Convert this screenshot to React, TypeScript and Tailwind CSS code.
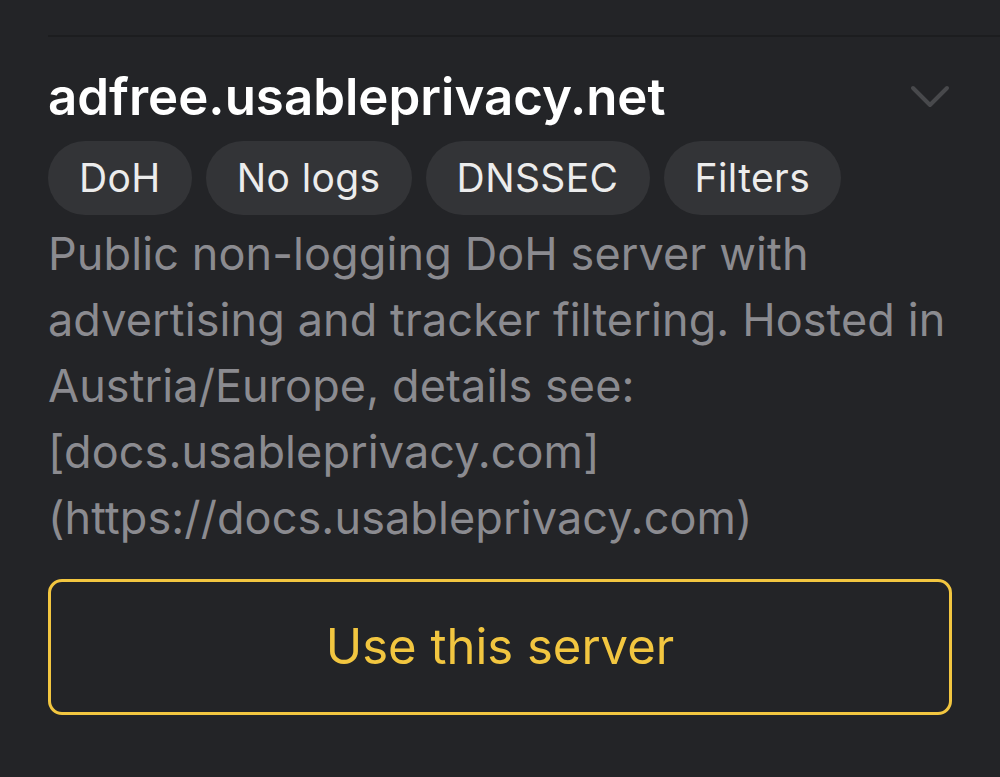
const tags = ["DoH", "No logs", "DNSSEC", "Filters"];

const description = [
    "Public non-logging DoH server with",
    "advertising and tracker filtering. Hosted in",
    "Austria/Europe, details see:",
    "[docs.usableprivacy.com]",
    "(https://docs.usableprivacy.com)",
];

const App = () => {
    return (
        <div className="w-full h-[777px] bg-[#232427] overflow-hidden" style={{ fontFamily: "Inter, 'Noto Sans', sans-serif" }}>
            {/* divider from the previous row */}
            <div className="ml-[48px] pt-[35px]">
                <div className="h-[2px] bg-[#1c1d1f]"></div>
            </div>

            <div className="px-[48px]">
                <div className="flex items-center justify-between mt-[30px]">
                    <h2 className="text-[51px] leading-[60px] font-semibold text-white whitespace-nowrap">
                        adfree.usableprivacy.net
                    </h2>
                    <svg width="40" height="26" viewBox="0 0 40 26" className="mr-[2px]">
                        <polyline points="3,4 20,21 37,4" fill="none" stroke="#48494c" strokeWidth="4" strokeLinecap="round" strokeLinejoin="round" />
                    </svg>
                </div>

                <div className="flex gap-[14px] mt-[14px]">
                    {tags.map((tag) => (
                        <span key={tag} className="h-[74px] px-[31px] flex items-center rounded-full bg-[#333437] text-[#ececec] text-[39px] tracking-[0.4px]">
                            {tag}
                        </span>
                    ))}
                </div>

                <p className="mt-[6px] text-[45px] leading-[66px] tracking-[0.1px] text-[#8b8b90] whitespace-nowrap">
                    {description.map((line) => (
                        <span key={line} className="block">
                            {line}
                        </span>
                    ))}
                </p>

                <button className="mt-[28px] w-full h-[136px] rounded-[14px] border-[3px] border-[#f2c640] text-[#f2c640] text-[49px] flex items-center justify-center">
                    Use this server
                </button>
            </div>
        </div>
    );
};

export default App;
